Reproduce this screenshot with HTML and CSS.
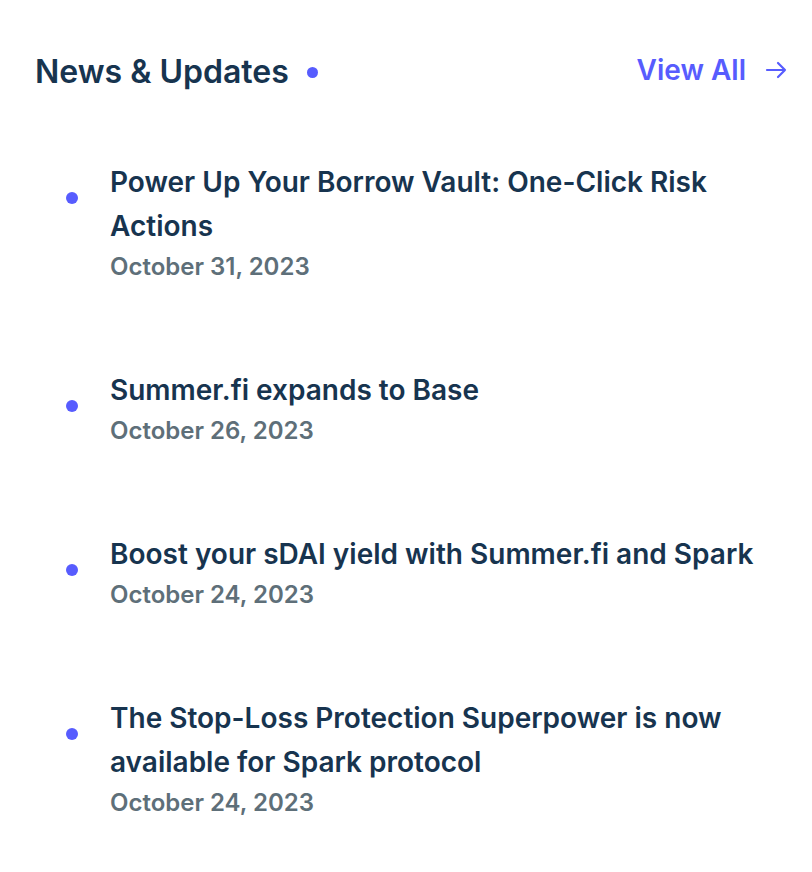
FILE: index.html
```html
<!DOCTYPE html>
<html>
<head>
<meta charset="utf-8">
<link rel="stylesheet" href="styles.css">
</head>
<body>
<section class="news">
  <header class="news-head">
    <h2 class="news-title">News &amp; Updates<span class="title-dot"></span></h2>
    <a class="view-all" href="#">View All
      <svg class="arrow" width="22" height="22" viewBox="0 0 22 22" fill="none" stroke="currentColor" stroke-width="2.2" stroke-linecap="round" stroke-linejoin="round"><path d="M2 11h18M13 4l7 7-7 7"/></svg>
    </a>
  </header>
  <ul class="news-list">
    <li class="news-item"><span class="bullet"></span><div class="item-body"><div class="item-title">Power Up Your Borrow Vault: One-Click Risk Actions</div><div class="item-date">October 31, 2023</div></div></li>
    <li class="news-item"><span class="bullet"></span><div class="item-body"><div class="item-title">Summer.fi expands to Base</div><div class="item-date">October 26, 2023</div></div></li>
    <li class="news-item"><span class="bullet"></span><div class="item-body"><div class="item-title">Boost your sDAI yield with Summer.fi and Spark</div><div class="item-date">October 24, 2023</div></div></li>
    <li class="news-item"><span class="bullet"></span><div class="item-body"><div class="item-title">The Stop-Loss Protection Superpower is now available for Spark protocol</div><div class="item-date">October 24, 2023</div></div></li>
  </ul>
</section>
</body>
</html>
```
FILE: styles.css
```css
* { box-sizing: border-box; }
html, body { margin: 0; background: #ffffff; }
body { font-family: Inter, "Noto Sans", sans-serif; color: #17344f; }
.news { padding: 52px 26px 0 35px; width: 812px; }
.news-head { display: flex; justify-content: space-between; align-items: center; height: 40px; }
.news-title { margin: 0; font-size: 32px; font-weight: 600; line-height: 40px; display: flex; align-items: center; color: #17344f; }
.title-dot { width: 11px; height: 11px; border-radius: 50%; background: #575cfe; margin-left: 18px; }
.view-all { display: flex; align-items: center; gap: 19px; color: #575cfe; text-decoration: none; font-size: 28px; font-weight: 600; line-height: 36px; margin-top: -4px; margin-right: -1px; }
.arrow { display: block; }
.news-list { list-style: none; margin: 68px 0 0; padding: 0 0 0 31px; display: flex; flex-direction: column; gap: 82px; }
.news-item { display: flex; align-items: flex-start; }
.bullet { width: 12px; height: 12px; border-radius: 50%; background: #575cfe; margin-top: 32px; flex: none; }
.item-body { margin-left: 32px; max-width: 660px; }
.item-title { font-size: 28px; font-weight: 600; line-height: 44px; color: #17344f; }
.item-date { font-size: 24px; font-weight: 600; line-height: 38px; color: #5e6f79; }
```
